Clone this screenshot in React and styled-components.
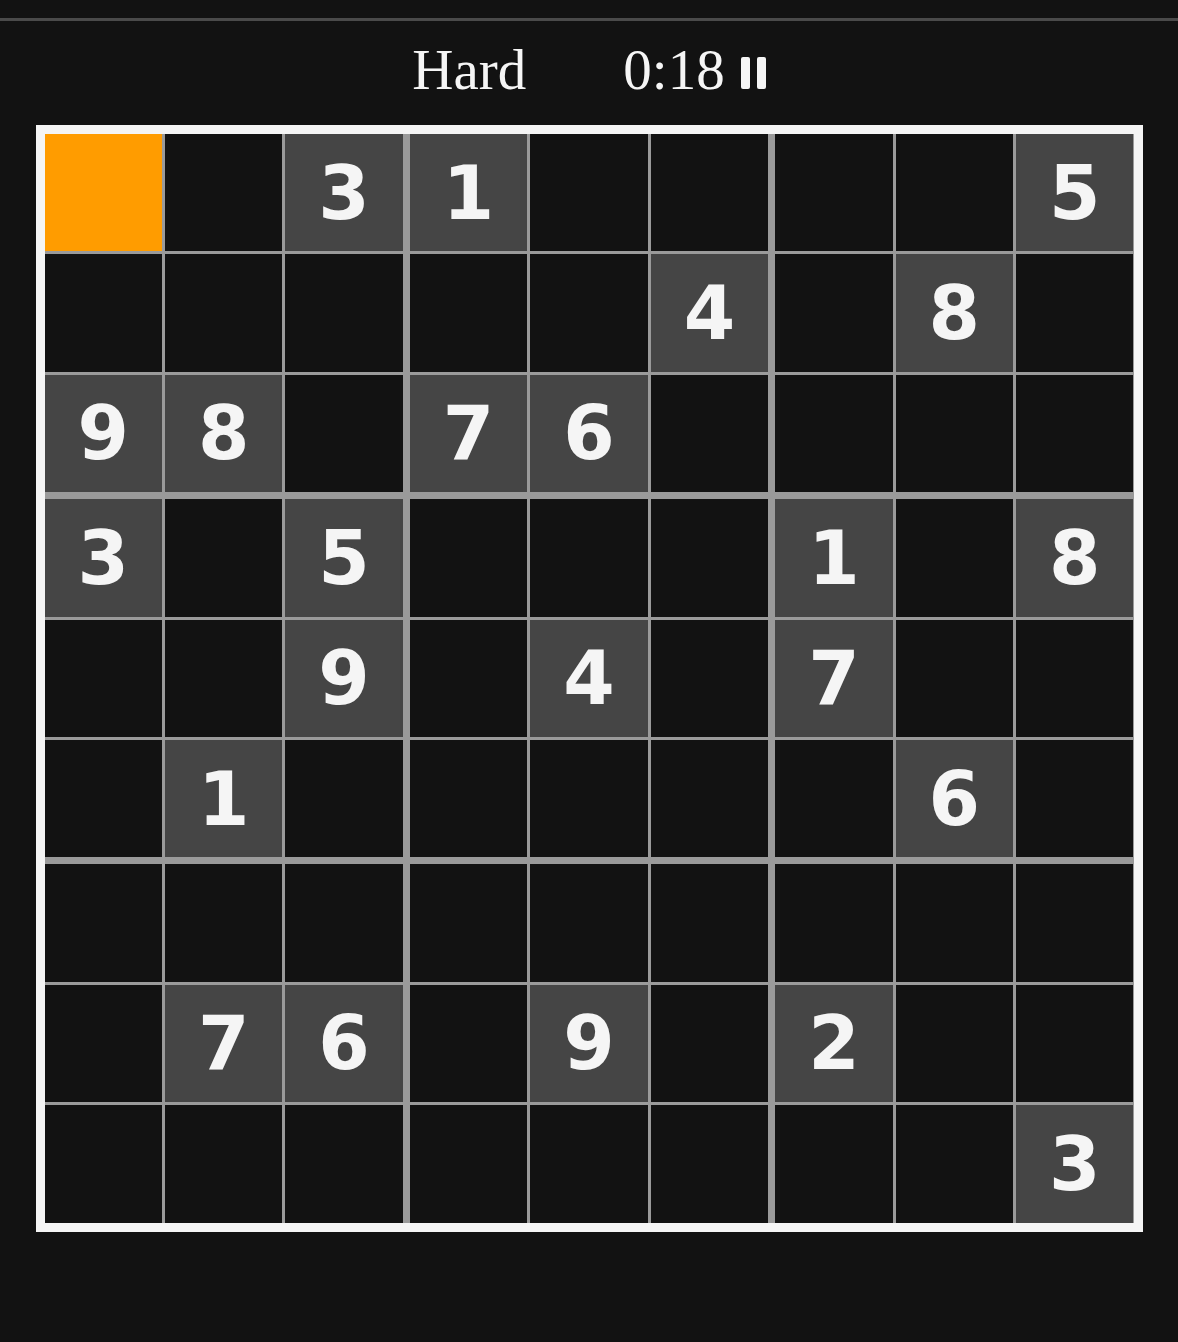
import styled, { createGlobalStyle } from "styled-components";

const PUZZLE = [
  "003100005",
  "000004080",
  "980760000",
  "305000108",
  "009040700",
  "010000060",
  "000000000",
  "076090200",
  "000000003",
];

const SELECTED = [0, 0];

const GlobalStyle = createGlobalStyle`
  html, body {
    margin: 0;
    padding: 0;
    background: #121212;
  }
  body {
    min-height: 1342px;
    font-family: "DejaVu Sans", sans-serif;
  }
`;

function App() {
  // group the 81 cells into 9 boxes of 3x3
  const boxes = [];
  for (let b = 0; b < 9; b++) {
    const br = Math.floor(b / 3) * 3;
    const bc = (b % 3) * 3;
    const cells = [];
    for (let i = 0; i < 9; i++) {
      const r = br + Math.floor(i / 3);
      const c = bc + (i % 3);
      const v = PUZZLE[r][c];
      cells.push({ r, c, value: v === "0" ? "" : v });
    }
    boxes.push(cells);
  }

  return (
    <>
      <GlobalStyle />
      <Page>
        <Divider />
        <Header>
          <Level>Hard</Level>
          <Timer>
            <span>0:18</span>
            <PauseButton aria-label="pause">
              <Bar />
              <Bar />
            </PauseButton>
          </Timer>
        </Header>

        <Board>
          {boxes.map((cells, b) => (
            <Box key={b}>
              {cells.map((cell) => (
                <Cell
                  key={`${cell.r}-${cell.c}`}
                  $given={cell.value !== ""}
                  $selected={cell.r === SELECTED[0] && cell.c === SELECTED[1]}
                >
                  {cell.value}
                </Cell>
              ))}
            </Box>
          ))}
        </Board>
      </Page>
    </>
  );
}

const Page = styled.div`
  padding-top: 18px;
  padding-bottom: 110px;
`;

const Divider = styled.div`
  height: 3px;
  background: #4a4a4a;
`;

const Header = styled.header`
  height: 104px;
  display: flex;
  align-items: center;
  justify-content: center;
  column-gap: 97px;
  color: #f5f5f5;
  font-family: "Liberation Serif", serif;
  font-size: 57px;
  line-height: 1;
`;

const Level = styled.div`
  margin-top: -7px;
`;

const Timer = styled.div`
  display: flex;
  align-items: center;
  column-gap: 16px;
  margin-top: -7px;
`;

const PauseButton = styled.button`
  display: flex;
  column-gap: 7px;
  padding: 0;
  border: none;
  background: none;
  margin-top: 6px;
`;

const Bar = styled.span`
  width: 9px;
  height: 32px;
  border-radius: 2px;
  background: #f5f5f5;
`;

const Board = styled.div`
  box-sizing: border-box;
  width: 1107px;
  margin: 0 auto;
  border: 9px solid #f5f5f5;
  background: #9a9a9a;
  display: grid;
  grid-template-columns: repeat(3, minmax(0, 1fr));
  gap: 7px;
`;

const Box = styled.div`
  display: grid;
  grid-template-columns: repeat(3, minmax(0, 1fr));
  grid-auto-rows: 117.4px;
  gap: 3px;
`;

const Cell = styled.div`
  display: flex;
  align-items: center;
  justify-content: center;
  background: ${(p) => (p.$selected ? "#ff9c00" : p.$given ? "#454545" : "#121212")};
  color: #f5f5f5;
  font-family: "DejaVu Sans", sans-serif;
  font-weight: bold;
  font-size: 74px;
  line-height: 1;
`;

export default App;
